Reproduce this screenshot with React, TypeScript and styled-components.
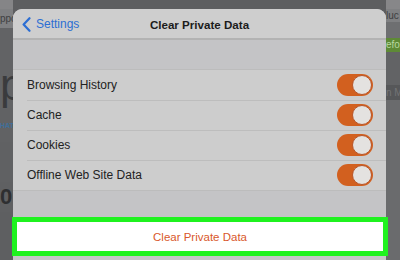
import React from "react";
import styled, { createGlobalStyle } from "styled-components";

const GlobalStyle = createGlobalStyle`
  html, body { margin: 0; padding: 0; }
  body {
    width: 400px;
    height: 260px;
    overflow: hidden;
    background: #5d5e60;
    font-family: "Liberation Sans", Arial, sans-serif;
  }
`;

const Stage = styled.div`
  position: relative;
  width: 400px;
  height: 260px;
  overflow: hidden;
  background: #5d5e60;
`;

const Backdrop = styled.div`
  display: grid;
  grid-template-columns: 13px 1fr 14px;
  height: 260px;
`;

const SideColumn = styled.div<{ $align?: string }>`
  display: flex;
  flex-direction: column;
  overflow: hidden;
  background: #5f6062;
  align-items: ${(p) => p.$align || "flex-start"};
`;

const SideBar = styled.div<{ $h: number; $bg: string; $color?: string; $size?: number; $weight?: number }>`
  height: ${(p) => p.$h}px;
  flex: none;
  width: 100%;
  background: ${(p) => p.$bg};
  color: ${(p) => p.$color || "#3e3f41"};
  font-size: ${(p) => p.$size || 10}px;
  font-weight: ${(p) => p.$weight || 400};
  display: flex;
  align-items: center;
  white-space: nowrap;
  line-height: 1;
`;

const Middle = styled.div`
  background: #5d5e60;
`;

const Modal = styled.div`
  position: absolute;
  top: 9px;
  left: 13px;
  width: 373px;
  height: 251px;
  border-radius: 9px 9px 0 0;
  background: #c6c6c8;
  display: flex;
  flex-direction: column;
`;

const Header = styled.div`
  height: 29px;
  flex: none;
  display: grid;
  grid-template-columns: 1fr auto 1fr;
  align-items: center;
  padding: 0 9px;
  background: #cecece;
  border-radius: 9px 9px 0 0;
  border-bottom: 2px solid #b3b3b3;
`;

const Back = styled.div`
  display: flex;
  align-items: center;
  gap: 5px;
  color: #2c6ed3;
  font-size: 12px;
  padding-top: 1px;
`;

const Title = styled.div`
  font-size: 11.6px;
  font-weight: 700;
  color: #1c1c1c;
  padding-top: 1px;
`;

const Band = styled.div<{ $h: number }>`
  height: ${(p) => p.$h}px;
  flex: none;
  background: #c4c4c6;
`;

const List = styled.div`
  display: flex;
  flex-direction: column;
  background: #cdcdcd;
  border-top: 1px solid #bcbcbc;
  border-bottom: 1px solid #bcbcbc;
`;

const Row = styled.div<{ $last?: boolean }>`
  height: 30px;
  display: flex;
  align-items: center;
  padding-left: 14px;
`;

const RowInner = styled.div<{ $last?: boolean }>`
  flex: 1;
  height: 100%;
  display: flex;
  align-items: center;
  justify-content: space-between;
  padding-right: 13px;
  border-bottom: ${(p) => (p.$last ? "none" : "1px solid #bdbdbd")};
`;

const Label = styled.span`
  font-size: 12px;
  color: #222;
`;

const Toggle = styled.div`
  width: 36px;
  height: 22px;
  border-radius: 11px;
  background: #d2601f;
  display: flex;
  align-items: center;
  justify-content: flex-end;
  padding: 0 1px;
  box-sizing: border-box;
`;

const Thumb = styled.div`
  width: 20px;
  height: 20px;
  border-radius: 50%;
  background: #e4e2e0;
  border: 1px solid #b8562a;
  box-sizing: border-box;
`;

const ClearButton = styled.div`
  flex: none;
  margin: 0 -2px 0 -1px;
  height: 39px;
  box-sizing: border-box;
  border: 5px solid #1ff21f;
  background: #ffffff;
  display: flex;
  align-items: center;
  justify-content: center;
  color: #d9572b;
  font-size: 11.5px;
  padding-top: 1px;
`;

const items = ["Browsing History", "Cache", "Cookies", "Offline Web Site Data"];

export default function App() {
  return (
    <Stage>
      <GlobalStyle />
      <Backdrop>
        <SideColumn>
          <SideBar $h={9} $bg="#858587" />
          <SideBar $h={19} $bg="#7f8082" $size={10}>ppo</SideBar>
          <SideBar $h={34} $bg="#626365" />
          <SideBar $h={46} $bg="#626365" $size={44} $color="#3a3b3d">p</SideBar>
          <SideBar $h={34} $bg="#616264" $size={7} $color="#3f6f9a" $weight={700}>HAT</SideBar>
          <SideBar $h={40} $bg="#606163" />
          <SideBar $h={30} $bg="#5f6062" $size={22} $color="#2e2f31" $weight={700}>0</SideBar>
          <SideBar $h={48} $bg="#5e5f61" />
        </SideColumn>
        <Middle />
        <SideColumn>
          <SideBar $h={9} $bg="#878789" />
          <SideBar $h={13} $bg="#7f8082" $size={10}>luc</SideBar>
          <SideBar $h={16} $bg="#6e6f71" />
          <SideBar $h={14} $bg="#5e8a36" $size={10} $color="#b7d7a0">efo</SideBar>
          <SideBar $h={33} $bg="#626365" />
          <SideBar $h={15} $bg="#565759" $size={10} $color="#737476">n M</SideBar>
          <SideBar $h={160} $bg="#6a6b6d" />
        </SideColumn>
      </Backdrop>
      <Modal>
        <Header>
          <Back>
            <svg width="9" height="15" viewBox="0 0 9 15">
              <path d="M7.5 1.2 L1.6 7.5 L7.5 13.8" fill="none" stroke="#2c6ed3" strokeWidth="2.2" strokeLinecap="round" strokeLinejoin="round" />
            </svg>
            <span>Settings</span>
          </Back>
          <Title>Clear Private Data</Title>
          <div />
        </Header>
        <Band $h={29} />
        <List>
          {items.map((t, i) => (
            <Row key={t}>
              <RowInner $last={i === items.length - 1}>
                <Label>{t}</Label>
                <Toggle>
                  <Thumb />
                </Toggle>
              </RowInner>
            </Row>
          ))}
        </List>
        <Band $h={26} />
        <ClearButton>Clear Private Data</ClearButton>
      </Modal>
    </Stage>
  );
}
